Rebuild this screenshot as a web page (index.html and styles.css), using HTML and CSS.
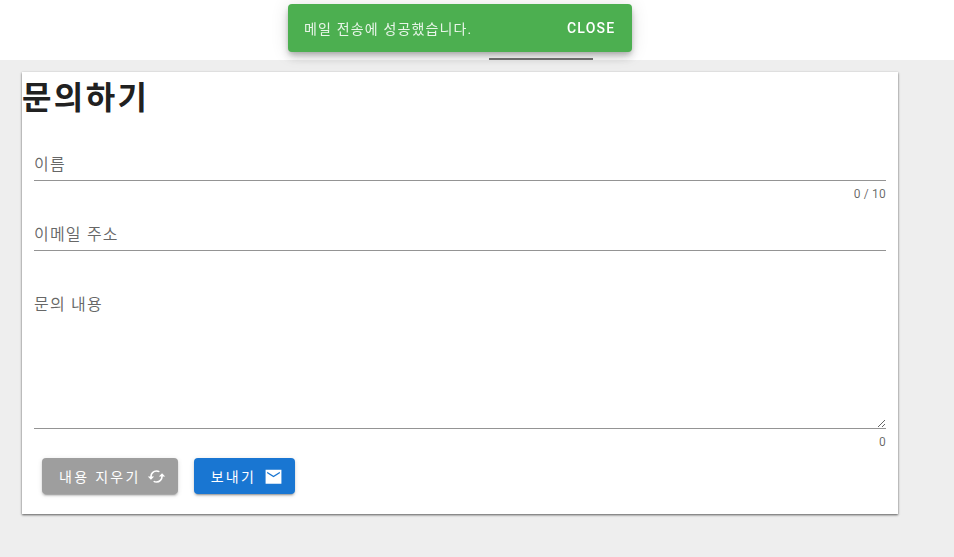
FILE: index.html
```html
<!DOCTYPE html>
<html lang="ko">
<head>
    <meta charset="UTF-8">
    <meta name="viewport" content="width=device-width, initial-scale=1.0">
    <title>문의하기</title>
    <link rel="stylesheet" href="styles.css">
</head>
<body>
    <header class="top-bar">
        <div class="tab-indicator"></div>
    </header>

    <main class="page">
        <section class="contact-card">
            <h1>문의하기</h1>
            <form class="contact-form">
                <div class="field field-name">
                    <input type="text" id="name" placeholder="이름">
                    <div class="counter">0 / 10</div>
                </div>
                <div class="field field-email">
                    <input type="email" id="email" placeholder="이메일 주소">
                </div>
                <div class="field field-message">
                    <textarea id="message" placeholder="문의 내용"></textarea>
                    <div class="counter">0</div>
                </div>
                <div class="actions">
                    <button type="reset" class="btn btn-clear">
                        내용 지우기
                        <svg class="btn-icon" viewBox="0 0 24 24"><path d="M19 8l-4 4h3a6 6 0 0 1-6 6c-1 0-1.970-.25-2.800-.7l-1.460 1.460A7.950 7.950 0 0 0 12 20a8 8 0 0 0 8-8h3zM6 12a6 6 0 0 1 6-6c1 0 1.970.25 2.800.7l1.460-1.460A7.950 7.950 0 0 0 12 4a8 8 0 0 0-8 8H1l4 4 4-4z"/></svg>
                    </button>
                    <button type="submit" class="btn btn-send">
                        보내기
                        <svg class="btn-icon" viewBox="0 0 24 24"><path d="M2 3.500h20v17.500H2zm18 4.500V6l-8 5-8-5v2l8 5z" fill-rule="evenodd"/></svg>
                    </button>
                </div>
            </form>
        </section>
    </main>

    <div class="snackbar">
        <span class="snackbar-text">메일 전송에 성공했습니다.</span>
        <span class="snackbar-close">CLOSE</span>
    </div>
</body>
</html>
```

FILE: styles.css
```css
/* General Styles */
html, body {
    margin: 0;
    padding: 0;
    height: 100%;
    overflow: hidden;
    font-family: Roboto, 'Noto Sans CJK KR', sans-serif;
    background-color: #eeeeee;
    color: rgba(0, 0, 0, 0.87);
}

.top-bar {
    height: 60px;
    background: #fff;
    display: flex;
    align-items: flex-end;
    padding-left: 489px;
    box-sizing: border-box;
}

.tab-indicator {
    width: 104px;
    height: 2px;
    background: #757575;
}

.page {
    padding: 12px 56px 0 22px;
}

.contact-card {
    background: #fff;
    height: 442px;
    box-sizing: border-box;
    box-shadow: 0 1px 2px rgba(0, 0, 0, 0.55), 0 1px 3px rgba(0, 0, 0, 0.12);
}

.contact-card h1 {
    margin: 0;
    padding-top: 2px;
    font-size: 32px;
    line-height: 48px;
    font-weight: 700;
    letter-spacing: 2.4px;
    color: #212121;
}

.contact-form {
    padding: 0 12px;
}

.field {
    display: flex;
    flex-direction: column;
}

.field input,
.field textarea {
    display: block;
    width: 100%;
    box-sizing: border-box;
    margin: 0;
    padding: 0;
    border: none;
    border-bottom: 1px solid #949494;
    border-radius: 0;
    outline: none;
    background: transparent;
    font-family: inherit;
    font-size: 16px;
    letter-spacing: 1.2px;
    color: rgba(0, 0, 0, 0.87);
}

.field input::placeholder,
.field textarea::placeholder {
    color: rgba(0, 0, 0, 0.6);
    opacity: 1;
}

.field input {
    height: 33px;
    line-height: 28px;
    padding-top: 1px;
}

.field-name {
    padding-top: 26px;
    height: 93px;
    box-sizing: border-box;
}

.field-email {
    padding-top: 3px;
    height: 37px;
    box-sizing: border-box;
}

.field-message {
    padding-top: 40px;
}

.field textarea {
    height: 137px;
    line-height: 24px;
    padding-top: 1px;
    resize: vertical;
}

.counter {
    font-size: 12px;
    line-height: 12px;
    letter-spacing: 0.2px;
    padding-top: 7px;
    text-align: right;
    color: rgba(0, 0, 0, 0.6);
}

.actions {
    display: flex;
    gap: 16px;
    padding: 10px 0 0 8px;
}

.btn {
    display: flex;
    align-items: center;
    height: 36px;
    padding: 0 16px 0 17px;
    border: none;
    border-radius: 4px;
    font-family: inherit;
    font-size: 14px;
    font-weight: 400;
    letter-spacing: 2.3px;
    color: #fff;
    cursor: pointer;
    box-shadow: 0 3px 1px -2px rgba(0, 0, 0, 0.2), 0 2px 2px rgba(0, 0, 0, 0.14), 0 1px 5px rgba(0, 0, 0, 0.12);
}

.btn-clear {
    background: #9e9e9e;
}

.btn-send {
    background: #1976d2;
}

.btn-icon {
    width: 19px;
    height: 19px;
    margin-left: 6px;
    margin-right: -4px;
    fill: #fff;
}

.btn-send .btn-icon {
    margin-left: 8px;
}

.snackbar {
    position: fixed;
    top: 4px;
    left: 288px;
    width: 344px;
    height: 48px;
    box-sizing: border-box;
    display: flex;
    align-items: center;
    justify-content: space-between;
    padding: 0 16.5px 0 16px;
    background: #4caf50;
    border-radius: 4px;
    color: #fff;
    box-shadow: 0 3px 5px -1px rgba(0, 0, 0, 0.2), 0 6px 10px rgba(0, 0, 0, 0.14), 0 1px 18px rgba(0, 0, 0, 0.12);
}

.snackbar-text {
    font-size: 14px;
    letter-spacing: 1.15px;
    color: rgba(255, 255, 255, 0.87);
}

.snackbar-close {
    font-size: 14px;
    font-weight: 500;
    letter-spacing: 1.25px;
}
```
